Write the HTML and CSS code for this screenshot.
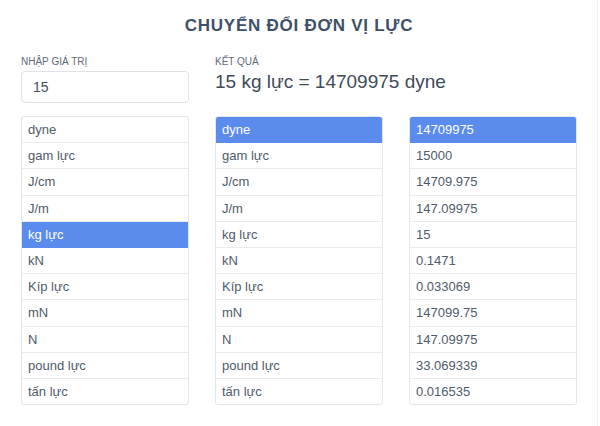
FILE: index.html
```html
<!DOCTYPE html>
<html lang="vi">
<head>
<meta charset="utf-8">
<title>Chuyển đổi đơn vị lực</title>
<link rel="stylesheet" href="styles.css">
</head>
<body>
<div class="page">
  <h1 class="title">CHUYỂN ĐỔI ĐƠN VỊ LỰC</h1>
  <div class="top">
    <div class="field">
      <div class="label">NHẬP GIÁ TRỊ</div>
      <div class="input">15</div>
    </div>
    <div class="field result-field">
      <div class="label">KẾT QUẢ</div>
      <div class="result">15 kg lực = 14709975 dyne</div>
    </div>
  </div>
  <div class="lists">
    <ul class="list">
      <li>dyne</li>
      <li>gam lực</li>
      <li>J/cm</li>
      <li>J/m</li>
      <li class="active">kg lực</li>
      <li>kN</li>
      <li>Kíp lực</li>
      <li>mN</li>
      <li>N</li>
      <li>pound lực</li>
      <li>tấn lực</li>
    </ul>
    <ul class="list">
      <li class="active">dyne</li>
      <li>gam lực</li>
      <li>J/cm</li>
      <li>J/m</li>
      <li>kg lực</li>
      <li>kN</li>
      <li>Kíp lực</li>
      <li>mN</li>
      <li>N</li>
      <li>pound lực</li>
      <li>tấn lực</li>
    </ul>
    <ul class="list">
      <li class="active">14709975</li>
      <li>15000</li>
      <li>14709.975</li>
      <li>147.09975</li>
      <li>15</li>
      <li>0.1471</li>
      <li>0.033069</li>
      <li>147099.75</li>
      <li>147.09975</li>
      <li>33.069339</li>
      <li>0.016535</li>
    </ul>
  </div>
</div>
</body>
</html>
```

FILE: styles.css
```css
html, body {
  margin: 0;
  padding: 0;
  background: #ffffff;
}
body {
  font-family: "Liberation Sans", Arial, sans-serif;
  color: #4f5a68;
}
.page {
  width: 556px;
  height: 426px;
  padding: 0 20px 0 21px;
  border-right: 1px solid #f1f2f4;
}
.title {
  margin: 0;
  padding-top: 16px;
  font-size: 17px;
  line-height: 20px;
  font-weight: bold;
  letter-spacing: 0.75px;
  text-align: center;
  color: #3e5069;
}
.top {
  display: grid;
  grid-template-columns: 168px 1fr;
  column-gap: 26px;
  margin-top: 20px;
}
.label {
  font-size: 10px;
  line-height: 12px;
  color: #5f6b7a;
  margin-bottom: 3px;
}
.input {
  box-sizing: border-box;
  height: 32px;
  border: 1px solid #dfe3e8;
  border-radius: 4px;
  padding: 0 11px;
  font-size: 14px;
  line-height: 30px;
  color: #444f5c;
}
.result {
  font-size: 19px;
  line-height: 22px;
  color: #3f4b59;
}
.lists {
  display: grid;
  grid-template-columns: repeat(3, 168px);
  column-gap: 26px;
  margin-top: 13px;
}
.list {
  list-style: none;
  margin: 0;
  padding: 0;
  border: 1px solid #e3e6ea;
  border-radius: 3px;
  overflow: hidden;
}
.list li {
  height: 25.2px;
  line-height: 25px;
  padding: 0 6px;
  font-size: 13px;
  color: #4f5b6a;
  border-bottom: 1px solid #e8eaed;
}
.list li:last-child {
  border-bottom: none;
}
.list li.active {
  background: #5b8ced;
  color: #ffffff;
  border-bottom-color: #5b8ced;
}
```
